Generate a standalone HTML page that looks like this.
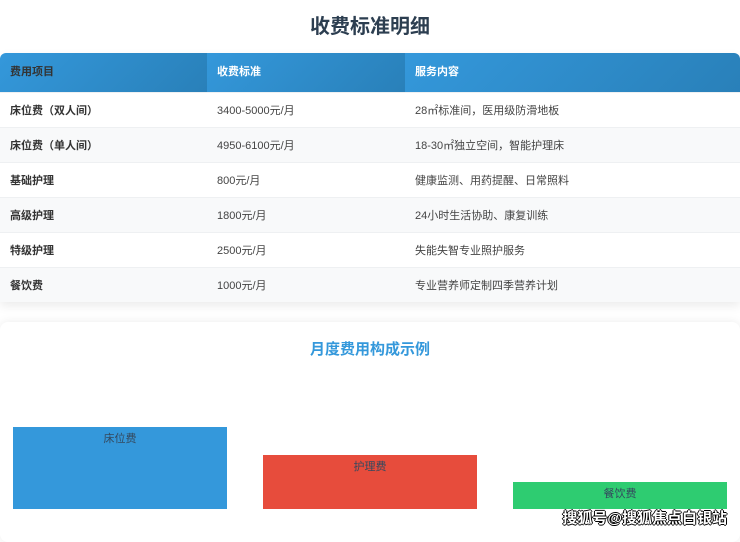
<!DOCTYPE html>
<html><head><meta charset="utf-8"><style>
*{margin:0;padding:0;box-sizing:border-box}
body{width:740px;height:535px;overflow:hidden;background:#fff;font-family:"Liberation Sans","Noto Sans CJK SC",sans-serif;position:relative}
h1{position:absolute;top:12px;left:0;width:740px;text-align:center;font-size:20px;font-weight:bold;color:#2c3e50;line-height:30px}
.tbl{position:absolute;top:53px;left:0;width:740px;border-radius:6px 6px 0 0;overflow:hidden;box-shadow:0 4px 10px rgba(0,0,0,0.08)}
.row{display:flex;height:35px;align-items:center;font-size:11px;color:#444}
.row div{padding-left:10px}
.c1{width:207px}.c2{width:198px}.c3{width:335px}
.hd{height:39px;color:#fff;font-weight:bold;font-size:11px}
.hd div{height:39px;line-height:39px;background:linear-gradient(135deg,#3498db,#2980b9)}
.row.alt{background:#f8f9fa}
.row .c1{font-weight:bold;color:#333}
.row+.row{border-top:1px solid #eef0f2}
.card{position:absolute;top:322px;left:0;width:740px;height:220px;border-radius:8px;background:#fff;box-shadow:0 0 10px rgba(0,0,0,0.08)}
.ct{position:absolute;top:338px;left:0;width:740px;text-align:center;color:#3498db;font-size:15px;font-weight:bold}
.bar{position:absolute;text-align:center;font-size:11px;color:#34495e;padding-top:3px}
.wm{position:absolute;right:13px;top:507px;font-size:15px;font-weight:bold;color:#fff;text-shadow:-1px 0 #000,1px 0 #000,0 -1px #000,0 1px #000}
</style></head><body>
<h1>收费标准明细</h1>
<div class="tbl">
<div class="row hd"><div class="c1">费用项目</div><div class="c2">收费标准</div><div class="c3">服务内容</div></div>
<div class="row"><div class="c1">床位费（双人间）</div><div class="c2">3400-5000元/月</div><div class="c3">28㎡标准间，医用级防滑地板</div></div>
<div class="row alt"><div class="c1">床位费（单人间）</div><div class="c2">4950-6100元/月</div><div class="c3">18-30㎡独立空间，智能护理床</div></div>
<div class="row"><div class="c1">基础护理</div><div class="c2">800元/月</div><div class="c3">健康监测、用药提醒、日常照料</div></div>
<div class="row alt"><div class="c1">高级护理</div><div class="c2">1800元/月</div><div class="c3">24小时生活协助、康复训练</div></div>
<div class="row"><div class="c1">特级护理</div><div class="c2">2500元/月</div><div class="c3">失能失智专业照护服务</div></div>
<div class="row alt"><div class="c1">餐饮费</div><div class="c2">1000元/月</div><div class="c3">专业营养师定制四季营养计划</div></div>
</div>
<div class="card"></div>
<div class="ct">月度费用构成示例</div>
<div class="bar" style="left:13px;top:427px;width:214px;height:82px;background:#3498db">床位费</div>
<div class="bar" style="left:263px;top:455px;width:214px;height:54px;background:#e74c3c">护理费</div>
<div class="bar" style="left:513px;top:482px;width:214px;height:27px;background:#2ecc71">餐饮费</div>
<div class="wm">搜狐号@搜狐焦点白银站</div>
</body></html>
